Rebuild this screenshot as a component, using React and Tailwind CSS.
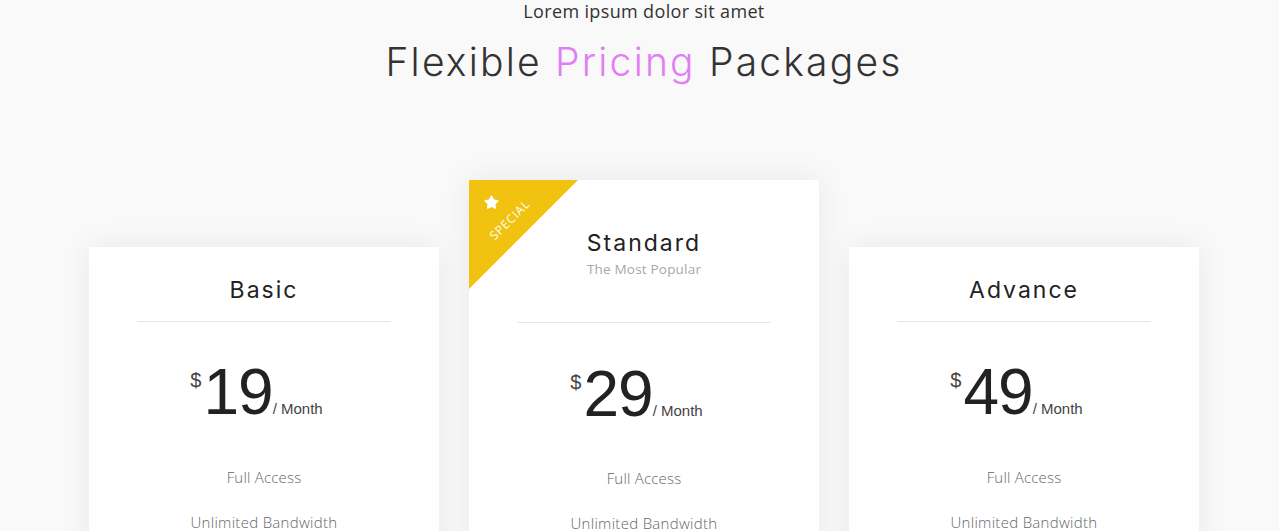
import React from "react";

function Star() {
  return (
    <svg width="17" height="17" viewBox="0 0 24 24" fill="#fff">
      <path d="M12 2.2c.5 0 .9.3 1.1.7l2.4 4.9 5.4.8c.9.1 1.3 1.3.6 1.9l-3.9 3.8.9 5.4c.2.9-.8 1.6-1.6 1.2L12 18.3l-4.9 2.6c-.8.4-1.8-.3-1.6-1.2l.9-5.4-3.9-3.8c-.7-.6-.3-1.8.6-1.9l5.4-.8 2.4-4.9c.2-.4.6-.7 1.1-.7z" />
    </svg>
  );
}

function Price({ value }) {
  return (
    <div className="flex justify-center items-start h-[60px] text-[#222] -ml-[15px]" style={{ fontFamily: '"Liberation Sans", Arial, sans-serif' }}>
      <span className="text-[20px] leading-none text-[#444] mt-[2px] mr-[2px]">$</span>
      <span className="text-[64px] leading-[48px] tracking-[-1px]">{value}</span>
      <span className="text-[15px] leading-none text-[#444] mt-[33px] ml-[0px]">/ Month</span>
    </div>
  );
}

function Features() {
  return (
    <div className="flex flex-col items-center text-[15px] text-[#666] font-light" style={{ fontFamily: '"Open Sans", sans-serif' }}>
      <div className="h-[20px] leading-[20px] tracking-[0.2px]">Full Access</div>
      <div className="h-[20px] leading-[20px] mt-[25px] tracking-[0.3px]">Unlimited Bandwidth</div>
    </div>
  );
}

function Card({ title, value, special }) {
  return (
    <div className={"relative w-[350px] h-[420px] bg-white shadow-[0_0_30px_rgba(0,0,0,0.07)] " + (special ? "" : "mt-[67px]")}>
      {special && (
        <div className="absolute left-0 top-0 w-[109px] h-[109px] bg-[#f1c20f] [clip-path:polygon(0_0,100%_0,0_100%)]">
          <div className="absolute left-[14px] top-[14px]">
            <Star />
          </div>
          <div
            className="absolute left-[6px] top-[33px] w-[70px] text-center text-white text-[12px] leading-[14px] tracking-[0.8px] -rotate-45"
            style={{ fontFamily: '"Open Sans", sans-serif' }}
          >
            SPECIAL
          </div>
        </div>
      )}
      <div className="px-[48px]">
        {special ? (
          <div className="pt-[50px] h-[142px] flex flex-col items-center">
            <div className="text-[23px] leading-[26px] text-[#222] tracking-[2px]" style={{ fontFamily: 'Inter, sans-serif' }}>{title}</div>
            <div className="text-[13.5px] leading-[18px] text-[#a8a8a8] mt-[4px] tracking-[0.2px]" style={{ fontFamily: '"Open Sans", sans-serif' }}>The Most Popular</div>
          </div>
        ) : (
          <div className="pt-[30px] h-[74px] flex flex-col items-center">
            <div className="text-[23px] leading-[26px] text-[#222] tracking-[2px]" style={{ fontFamily: 'Inter, sans-serif' }}>{title}</div>
          </div>
        )}
        <div className="h-px bg-[#e6e6e6]" />
        <div className={special ? "pt-[47px]" : "pt-[46px]"}>
          <Price value={value} />
        </div>
        <div className={special ? "pt-[38px]" : "pt-[39px]"}>
          <Features />
        </div>
      </div>
    </div>
  );
}

export default function App() {
  return (
    <div className="w-full h-[531px] bg-[#f9f9f9] overflow-hidden pl-[9px]">
      <div className="flex flex-col items-center">
        <div className="text-[18px] leading-[22px] text-[#333] tracking-[0.35px]" style={{ fontFamily: '"Open Sans", sans-serif' }}>
          Lorem ipsum dolor sit amet
        </div>
        <div className="mt-[17px] text-[39px] leading-[46px] text-[#333] font-light tracking-[2.2px]" style={{ fontFamily: 'Inter, sans-serif' }}>
          Flexible <span className="text-[#e17ef5]">Pricing</span> Packages
        </div>
      </div>
      <div className="flex justify-center gap-[30px] mt-[95px] items-start">
        <Card title="Basic" value="19" />
        <Card title="Standard" value="29" special />
        <Card title="Advance" value="49" />
      </div>
    </div>
  );
}
